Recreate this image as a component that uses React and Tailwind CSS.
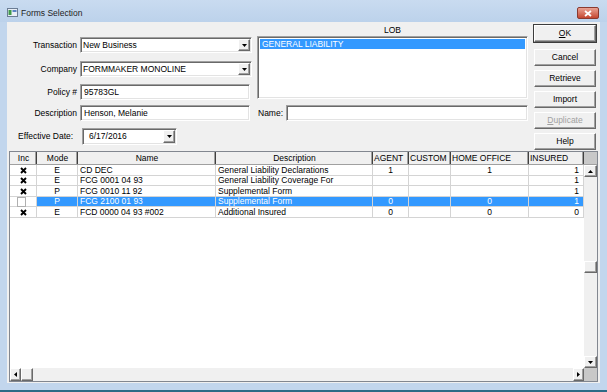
import React from 'react';

const sunken = 'bg-white border border-t-[#a0a0a0] border-l-[#a0a0a0] border-b-white border-r-white shadow-[inset_1px_1px_0_#696969,inset_-1px_-1px_0_#e3e3e3]';
const raised = 'bg-[#f0f0f0] border border-t-white border-l-white border-b-[#696969] border-r-[#696969] shadow-[inset_-1px_-1px_0_#a0a0a0]';

const rows = [
    { inc: true, mode: 'E', name: 'CD DEC', desc: 'General Liability Declarations', agent: '1', office: '1', ins: '1' },
    { inc: true, mode: 'E', name: 'FCG 0001 04 93', desc: 'General Liability Coverage For', agent: '', office: '', ins: '1' },
    { inc: true, mode: 'P', name: 'FCG 0010 11 92', desc: 'Supplemental Form', agent: '', office: '', ins: '1' },
    { inc: false, mode: 'P', name: 'FCG 2100 01 93', desc: 'Supplemental Form', agent: '0', office: '0', ins: '1', sel: true },
    { inc: true, mode: 'E', name: 'FCD 0000 04 93 #002', desc: 'Additional Insured', agent: '0', office: '0', ins: '0' },
];

const cols = [
    { label: 'Inc', w: 'w-[27px]', head: 'justify-center' },
    { label: 'Mode', w: 'w-[41px]', head: 'justify-center' },
    { label: 'Name', w: 'w-[138px]', head: 'justify-center' },
    { label: 'Description', w: 'w-[157px]', head: 'justify-center' },
    { label: 'AGENT', w: 'w-[36px]', head: 'justify-start' },
    { label: 'CUSTOM', w: 'w-[42px]', head: 'justify-start' },
    { label: 'HOME OFFICE', w: 'w-[78px]', head: 'justify-start' },
    { label: 'INSURED', w: 'w-[55px]', head: 'justify-start' },
];

const Arrow = ({ dir }) => {
    const pts = {
        down: '1,2 6,2 3.5,5',
        up: '1,5 6,5 3.5,2',
        left: '5,1 5,6 2,3.5',
        right: '2,1 2,6 5,3.5',
    }[dir];
    return (
        <svg width="7" height="7" viewBox="0 0 7 7">
            <polygon points={pts} fill="#000" />
        </svg>
    );
};

const Combo = ({ value, w }) => (
    <div className={`${sunken} ${w} h-[16px] flex items-center`}>
        <span className="flex-1 pl-[2px] whitespace-nowrap overflow-hidden">{value}</span>
        <div className={`${raised} w-[12px] h-[12px] mr-[1px] flex items-center justify-center`}>
            <Arrow dir="down" />
        </div>
    </div>
);

const TextBox = ({ value, w }) => (
    <div className={`${sunken} ${w} h-[16px] flex items-center pl-[3px]`}>{value}</div>
);

const Btn = ({ children, def }) => (
    <div className={`${def ? 'outline outline-1 outline-[#3c3c3c]' : ''} ${raised} h-[17px] flex items-center justify-center`}>
        {children}
    </div>
);

const XMark = () => (
    <svg width="7" height="7" viewBox="0 0 7 7">
        <path d="M1 1 L6 6 M6 1 L1 6" stroke="#000" strokeWidth="1.9" />
    </svg>
);

export default function App() {
    return (
        <div className="w-[607px] h-[392px] bg-[#c2d6ed] flex flex-col font-['Liberation_Sans',Arial,sans-serif] text-[8.5px] leading-none text-black overflow-hidden">
            {/* title bar */}
            <div className="h-[22px] flex items-start bg-gradient-to-b from-[#c9dbf0] to-[#bcd2eb] pl-[7px] pr-[8px] pt-[8px] shrink-0">
                <svg width="11" height="9" viewBox="0 0 11 9" className="mr-[3px]">
                    <rect x="0.5" y="0.5" width="10" height="8" fill="#e8eef6" stroke="#6b7d94" />
                    <rect x="1.5" y="2" width="3" height="5" fill="#3f9a4a" />
                    <rect x="5.5" y="2" width="4" height="2" fill="#5b84c4" />
                </svg>
                <span className="text-[8.5px] text-[#1e1e1e] mt-[1px]">Forms Selection</span>
                <div className="ml-auto w-[22px] h-[12px] mt-[-1px] rounded-[2px] border border-[#8a3a30] bg-gradient-to-b from-[#e8a193] to-[#c4452f] flex items-center justify-center">
                    <svg width="8" height="7" viewBox="0 0 8 7">
                        <path d="M1 1 L7 6 M7 1 L1 6" stroke="#fff" strokeWidth="1.8" />
                    </svg>
                </div>
            </div>

            {/* client area */}
            <div className="mx-[7px] h-[361px] bg-[#f0f0f0] flex flex-col shrink-0">
                <div className="h-[129px] flex shrink-0">
                    {/* left column */}
                    <div className="w-[245px] pt-[15px] flex flex-col">
                        <div className="flex items-center h-[16px]">
                            <span className="w-[70px] text-right">Transaction</span>
                            <div className="ml-[3px]"><Combo value="New Business" w="w-[172px]" /></div>
                        </div>
                        <div className="flex items-center h-[16px] mt-[8px]">
                            <span className="w-[70px] text-right">Company</span>
                            <div className="ml-[3px]"><Combo value="FORMMAKER MONOLINE" w="w-[172px]" /></div>
                        </div>
                        <div className="flex items-center h-[16px] mt-[7px]">
                            <span className="w-[70px] text-right">Policy #</span>
                            <div className="ml-[3px]"><TextBox value="95783GL" w="w-[170px]" /></div>
                        </div>
                        <div className="flex items-center h-[16px] mt-[5px]">
                            <span className="w-[70px] text-right">Description</span>
                            <div className="ml-[3px]"><TextBox value="Henson, Melanie" w="w-[170px]" /></div>
                        </div>
                        <div className="flex items-center h-[17px] mt-[7px] pl-[11px]">
                            <span className="w-[64px]">Effective Date:</span>
                            <div className={`${sunken} w-[95px] h-[17px] flex items-center`}>
                                <span className="flex-1 pl-[6px]">6/17/2016</span>
                                <div className={`${raised} w-[12px] h-[13px] mr-[1px] flex items-center justify-center`}>
                                    <Arrow dir="down" />
                                </div>
                            </div>
                        </div>
                    </div>

                    {/* LOB column */}
                    <div className="w-[271px] ml-[5px] pt-[4px] flex flex-col">
                        <div className="h-[10px] text-center">LOB</div>
                        <div className={`${sunken} h-[63px] p-[2px]`}>
                            <div className="h-[10px] bg-[#3399ff] text-white flex items-center pl-[2px]">GENERAL LIABILITY</div>
                        </div>
                        <div className="flex items-center h-[16px] mt-[6px]">
                            <span className="w-[29px] pl-[1px]">Name:</span>
                            <TextBox value="" w="w-[242px]" />
                        </div>
                    </div>

                    {/* buttons */}
                    <div className="w-[62px] ml-[6px] pt-[3px] flex flex-col">
                        <Btn def><span><span className="underline">O</span>K</span></Btn>
                        <div className="mt-[7px]"><Btn>Cancel</Btn></div>
                        <div className="mt-[4px]"><Btn>Retrieve</Btn></div>
                        <div className="mt-[4px]"><Btn>Import</Btn></div>
                        <div className="mt-[4px]"><Btn><span className="text-[#a0a0a0]"><span className="underline">D</span>uplicate</span></Btn></div>
                        <div className="mt-[4px]"><Btn>Help</Btn></div>
                    </div>
                </div>

                {/* grid */}
                <div className="ml-[2px] w-[589px] h-[231px] border border-[#828790] flex shrink-0">
                    <div className="flex-1 flex flex-col bg-white">
                        <div className="h-[13px] flex bg-[#f0f0f0] border-b border-[#a0a0a0] shrink-0">
                            {cols.map((c) => (
                                <div key={c.label} className={`${c.w} flex items-center ${c.head} border-r border-r-[#404040] shadow-[inset_-1px_0_0_#a0a0a0] whitespace-nowrap overflow-hidden pl-[1px]`}>
                                    {c.label}
                                </div>
                            ))}
                        </div>
                        {rows.map((r, i) => (
                            <div key={i} className={`${i % 2 === 0 ? 'h-[11px]' : 'h-[10px]'} flex shrink-0`}>
                                <div className="w-[27px] flex items-center justify-center border-r border-b border-[#d4d4d4] bg-white">
                                    {r.inc ? <XMark /> : <div className="w-[9px] h-[10px] border border-[#b0b0b0] bg-white mr-[4px]" />}
                                </div>
                                <div className={`flex ${r.sel ? 'bg-[#3399ff] text-white' : ''}`}>
                                    <div className="w-[41px] flex items-center justify-center border-r border-b border-[#d4d4d4]">{r.mode}</div>
                                    <div className="w-[138px] flex items-center pl-[2px] border-r border-b border-[#d4d4d4] whitespace-nowrap overflow-hidden">{r.name}</div>
                                    <div className="w-[157px] flex items-center pl-[2px] border-r border-b border-[#d4d4d4] whitespace-nowrap overflow-hidden">{r.desc}</div>
                                    <div className="w-[36px] flex items-center justify-center border-r border-b border-[#d4d4d4]">{r.agent}</div>
                                    <div className="w-[42px] border-r border-b border-[#d4d4d4]" />
                                    <div className="w-[78px] flex items-center justify-center border-r border-b border-[#d4d4d4]">{r.office}</div>
                                    <div className="w-[55px] flex items-center justify-end pr-[4px] border-r border-b border-[#d4d4d4]">{r.ins}</div>
                                </div>
                            </div>
                        ))}
                        <div className="flex-1" />
                        {/* horizontal scrollbar */}
                        <div className="h-[13px] flex bg-[#f0f0f0] shrink-0">
                            <div className={`${raised} w-[11px] flex items-center justify-center`}><Arrow dir="left" /></div>
                            <div className={`${raised} w-[12px]`} />
                            <div className="flex-1" />
                            <div className={`${raised} w-[11px] flex items-center justify-center`}><Arrow dir="right" /></div>
                        </div>
                    </div>
                    {/* vertical scrollbar */}
                    <div className="w-[13px] flex flex-col bg-[#f0f0f0] shrink-0">
                        <div className="h-[13px] bg-[#c8c8c8] border-b border-[#a0a0a0]" />
                        <div className={`${raised} h-[12px] flex items-center justify-center`}><Arrow dir="up" /></div>
                        <div className="h-[84px]" />
                        <div className={`${raised} h-[12px]`} />
                        <div className="flex-1" />
                        <div className={`${raised} h-[12px] flex items-center justify-center`}><Arrow dir="down" /></div>
                        <div className="h-[13px] bg-[#c8c8c8]" />
                    </div>
                </div>
            </div>
            <div className="flex-1" />
            <div className="h-[2px] bg-[#2b6b86]" />
        </div>
    );
}
